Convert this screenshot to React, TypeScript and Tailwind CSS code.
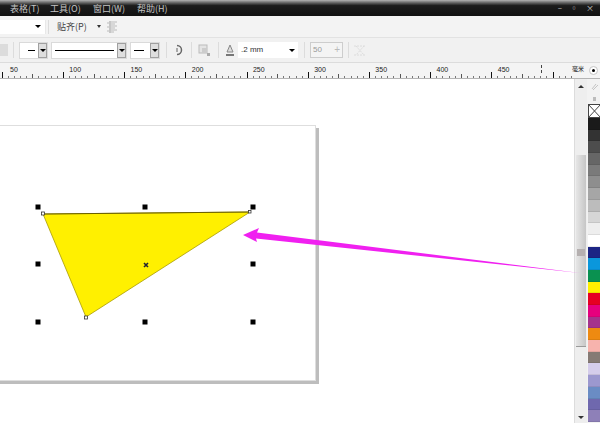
import React from "react";

const font = { fontFamily: '"Noto Sans CJK SC", "Liberation Sans", sans-serif' };

const menus = [
  ["表格(T)", "w-[40px] ml-[10px]"],
  ["工具(O)", "w-[43px]"],
  ["窗口(W)", "w-[44px]"],
  ["帮助(H)", "w-[40px]"],
];

const swatches = [
  "#1a1a1a", "#333333", "#4d4d4d", "#666666", "#7a7a7a", "#8e8e8e", "#a6a6a6", "#bcbcbc", "#d6d6d6", "#eeeeee", "#ffffff",
  "#1c2585", "#0a97dc", "#0a9150", "#fff000", "#e60023", "#e6007e", "#a5338c", "#ee8a11", "#f7b3ad", "#857a74",
  "#d5cdeb", "#9c98cf", "#6a8cc4", "#6f68ae", "#8e80b8",
];

const ticks = Array.from({ length: 96 }, (_, i) => i);

function Drop({ w, children }: { w: string; children?: React.ReactNode }) {
  return (
    <div className={`${w} h-[17px] flex items-center bg-white border border-[#dadada]`}>
      <div className="flex-1 flex items-center px-[3px] min-w-0">{children}</div>
      <div className="w-[9px] h-[15px] bg-[#dedede] border border-[#a0a0a0] flex items-center justify-center">
        <div className="w-0 h-0 border-l-[3px] border-r-[3px] border-t-[3px] border-l-transparent border-r-transparent border-t-black" />
      </div>
    </div>
  );
}

export default function App() {
  return (
    <div className="relative w-[600px] h-[423px] overflow-hidden flex flex-col bg-white text-[#333]" style={font}>
      {/* title / menu bar */}
      <div className="h-[16px] shrink-0 flex items-center bg-gradient-to-b from-[#b4b4b4] via-[#1c1c1c] via-35% to-[#111111]">
        {menus.map(([t, c]) => (
          <div key={t} className={`${c} shrink-0 text-[9px] leading-none text-[#c4c4c4] pt-[1px]`}>{t}</div>
        ))}
        <div className="ml-auto mr-[6px] flex items-center gap-[8px] text-[8px] leading-none text-[#c8c8c8]">
          <span>–</span>
          <span>▫</span>
          <span>×</span>
        </div>
      </div>

      {/* row 1 */}
      <div className="h-[22px] shrink-0 flex items-center bg-[#f3f3f3] border-b border-[#e2e2e2]">
        <div className="w-[46px] h-[14px] bg-white flex items-center justify-end pr-[4px] border-r border-[#e8e8e8]">
          <div className="w-0 h-0 border-l-[3px] border-r-[3px] border-t-[3px] border-l-transparent border-r-transparent border-t-black" />
        </div>
        <div className="w-px h-[14px] bg-[#dcdcdc] ml-[2px]" />
        <span className="ml-[8px] text-[9px] leading-none text-[#444]">贴齐(P)</span>
        <div className="ml-[10px] w-0 h-0 border-l-[2px] border-r-[2px] border-t-[3px] border-l-transparent border-r-transparent border-t-[#333]" />
        <svg className="ml-[5px]" width="12" height="12" viewBox="0 0 12 12">
          <path d="M4 0v12" stroke="#999" />
          <path d="M1 2h2M1 6h2M1 10h2M5 1h6M5 3h4M5 5h6M5 7h4M5 9h6M5 11h3" stroke="#bbb" />
        </svg>
      </div>

      {/* row 2 */}
      <div className="h-[25px] shrink-0 flex items-center bg-[#f1f1f1] border-b border-[#dcdcdc]">
        <div className="w-[8px] h-[12px] bg-[#dcdcdc]" />
        <div className="w-px h-[16px] bg-[#dcdcdc] ml-[5px]" />
        <div className="ml-[5px]">
          <Drop w="w-[29px]"><div className="w-[8px] h-px bg-black ml-[5px]" /></Drop>
        </div>
        <div className="ml-[3px]">
          <Drop w="w-[76px]"><div className="flex-1 h-px bg-black" /></Drop>
        </div>
        <div className="ml-[3px]">
          <Drop w="w-[30px]"><div className="w-[10px] h-px bg-black" /></Drop>
        </div>
        <div className="w-px h-[16px] bg-[#dcdcdc] ml-[6px]" />
        <svg className="ml-[5px]" width="12" height="12" viewBox="0 0 12 12">
          <path d="M5 1.5a4.5 4.5 0 0 1 0 9" fill="none" stroke="#666" strokeWidth="1.5" />
          <path d="M5 4v4" stroke="#aaa" strokeWidth="2" />
        </svg>
        <div className="w-px h-[16px] bg-[#dcdcdc] ml-[7px]" />
        <svg className="ml-[6px]" width="13" height="13" viewBox="0 0 13 13">
          <rect x="1" y="1" width="8" height="8" fill="#e4e4e4" stroke="#bbb" />
          <rect x="4" y="4" width="5" height="5" fill="#ccc" />
          <rect x="9" y="9" width="3" height="3" fill="#aaa" />
        </svg>
        <div className="w-px h-[16px] bg-[#dcdcdc] ml-[7px]" />
        <svg className="ml-[6px]" width="10" height="13" viewBox="0 0 10 13">
          <path d="M5 1 8 8H2z" fill="#ddd" stroke="#888" />
          <path d="M1 11h8" stroke="#777" strokeWidth="2" />
        </svg>
        <div className="ml-[3px] w-[60px] h-[16px] bg-white flex items-center justify-between px-[3px] text-[8px] leading-none text-[#333]" style={{ fontFamily: '"Liberation Sans", sans-serif' }}>
          <span>.2 mm</span>
          <div className="w-0 h-0 border-l-[3px] border-r-[3px] border-t-[3px] border-l-transparent border-r-transparent border-t-black" />
        </div>
        <div className="w-px h-[16px] bg-[#dcdcdc] ml-[6px]" />
        <div className="ml-[5px] w-[33px] h-[16px] bg-[#f4f4f4] border border-[#cdcdcd] flex items-center justify-between px-[2px] text-[8px] leading-none text-[#999]" style={{ fontFamily: '"Liberation Sans", sans-serif' }}>
          <span>50</span>
          <span className="text-[10px] text-[#bbb]">+</span>
        </div>
        <div className="w-px h-[16px] bg-[#dcdcdc] ml-[5px]" />
        <svg className="ml-[4px]" width="14" height="13" viewBox="0 0 14 13">
          <path d="M1 2h12M1 11h12M3 2l8 9M11 2l-8 9" stroke="#dcdcdc" strokeDasharray="2 1" fill="none" />
        </svg>
      </div>

      {/* ruler */}
      <div className="h-[16px] shrink-0 flex bg-[#f4f4f4] border-b border-[#b4b4b4]">
        <div className="relative w-[572px] shrink-0 overflow-hidden" style={{ fontFamily: '"Liberation Sans", sans-serif' }}>
          {[50, 100, 150, 200, 250, 300, 350, 400, 450].map((n, i) => (
            <span key={n} className="absolute top-[3px] text-[7px] leading-none text-[#222] -translate-x-1/2" style={{ left: 14 + i * 61.2 }}>{n}</span>
          ))}
          {ticks.map((i) => (
            <div key={i} className={`absolute bottom-0 w-px ${i % 10 === 0 ? "h-[6px] bg-[#111]" : i % 5 === 0 ? "h-[4px] bg-[#555]" : "h-[2px] bg-[#777]"}`} style={{ left: 14 + (i - 2) * 6.12 }} />
          ))}
          <div className="absolute top-[2px] left-[541px] h-[8px] border-l border-dashed border-[#444]" />
        </div>
        <span className="shrink-0 w-[14px] pt-[3px] text-[6px] leading-none text-[#111] whitespace-nowrap">毫米</span>
        <div className="flex-1 flex items-center justify-end pr-[2px]">
          <div className="w-[9px] h-[9px] rounded-full border border-[#c4c4c4] bg-white flex items-center justify-center">
            <div className="w-[3px] h-[3px] rounded-full bg-black" />
          </div>
        </div>
      </div>

      {/* work area */}
      <div className="flex-1 min-h-0 flex bg-white">
        <div className="relative w-[574px] shrink-0 overflow-hidden">
          {/* page */}
          <div className="absolute left-[-10px] top-[46px] w-[326px] h-[256px] bg-white border border-[#dedede] shadow-[3px_3px_0_0_#bdbdbd]" />
        </div>

        {/* vertical scrollbar */}
        <div className="relative w-[13px] shrink-0 bg-[#eeeeee] border-l border-[#dcdcdc] flex flex-col">
          <div className="mt-[76px] h-[192px] mx-[1px] bg-gradient-to-r from-[#e6e6e6] to-[#c6c6c6] border-b border-[#9a9a9a]" />
          <div className="absolute left-[2px] top-[170px] w-[8px] h-[7px] bg-[#b5b0b0]" />
          <div className="absolute left-[3px] top-[337px] w-0 h-0 border-l-[3px] border-r-[3px] border-t-[3px] border-l-transparent border-r-transparent border-t-[#333]" />
          <div className="absolute left-[3px] top-[6px] w-0 h-0 border-l-[3px] border-r-[3px] border-b-[3px] border-l-transparent border-r-transparent border-b-[#333]" />
        </div>

        {/* palette */}
        <div className="flex-1 flex flex-col bg-[#f2f2f2] pl-[1px] overflow-hidden">
          <div className="h-[25px] shrink-0 flex flex-col items-center justify-end gap-[6px] pb-[3px]">
            <svg width="9" height="9" viewBox="0 0 9 9">
              <path d="M2 7 6 2M3 8l5-5" stroke="#c4c4c4" fill="none" />
            </svg>
            <div className="w-[3px] h-[4px] bg-[#bcbcbc]" />
          </div>
          <svg className="shrink-0" width="13" height="14" viewBox="0 0 13 14">
            <rect x="0.5" y="0.5" width="12" height="13" fill="#fff" stroke="#444" />
            <path d="M0 0l13 14M13 0 0 14" stroke="#444" />
          </svg>
          {swatches.map((c, i) => (
            <div key={i} className="h-[11.7px] shrink-0 border-b border-[#00000014]" style={{ backgroundColor: c }} />
          ))}
        </div>
      </div>

      {/* drawing overlay */}
      <svg className="absolute left-0 top-0 pointer-events-none" width="600" height="423" viewBox="0 0 600 423">
        <polygon points="43,214 250,212 86,317" fill="#fff000" stroke="#a89a00" strokeWidth="0.8" />
        <path d="M43 214 250 212" stroke="#6a6000" strokeWidth="1" />
        <rect x="41.5" y="212" width="3" height="3" fill="#fff" stroke="#333" strokeWidth="0.8" />
        <rect x="84.5" y="316" width="3" height="3" fill="#fff" stroke="#333" strokeWidth="0.8" />
        <rect x="248.5" y="210.5" width="2.5" height="2.5" fill="#fff" stroke="#333" strokeWidth="0.8" />
        {[[38, 207], [145, 207], [253, 207], [38, 264], [253, 264], [38, 322], [145, 322], [253, 322]].map(([x, y]) => (
          <rect key={`${x}-${y}`} x={x - 2.5} y={y - 2.5} width="5" height="5" fill="#000" />
        ))}
        <path d="M144 263l4 4M148 263l-4 4" stroke="#223" strokeWidth="1.6" />
        <polygon points="243,235 259,228 257,232.5 580,273 256,238.5 257,242" fill="#f020f0" />
      </svg>
    </div>
  );
}
